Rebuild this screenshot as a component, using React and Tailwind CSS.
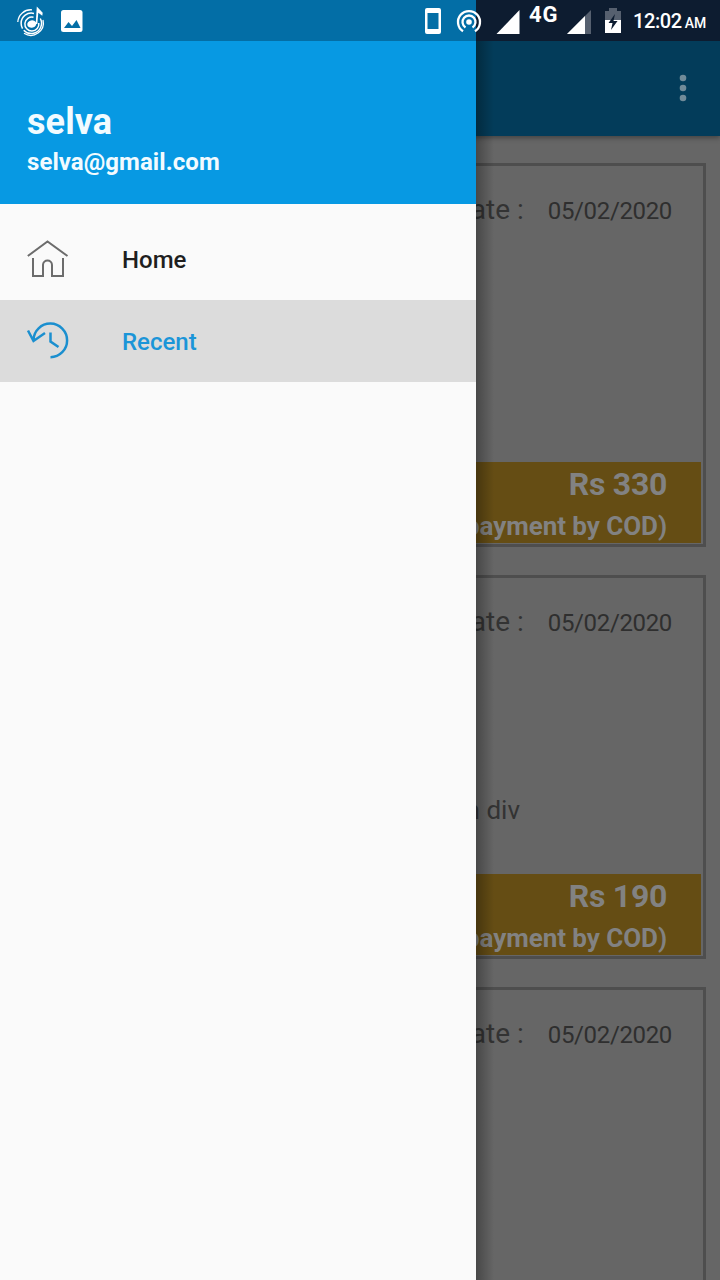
const cards = [
  { date: '05/02/2020', price: 'Rs 330', note: '' },
  { date: '05/02/2020', price: 'Rs 190', note: 'n div' },
  { date: '05/02/2020' },
];

function StatusBar() {
  return (
    <div className="absolute inset-x-0 top-0 flex h-[41px] text-white">
      <div className="w-[476px] bg-[#036ea6]" />
      <div className="flex-1 bg-[#0d1c30]" />
      <svg className="absolute inset-0" width="720" height="41" viewBox="0 0 720 41" fill="none" stroke="#fff">
        <ellipse cx="31.800" cy="24" rx="4.600" ry="3.700" fill="#fff" stroke="none" transform="rotate(-15 31.8 24)" />
        <path d="M35.700 24L36.800 6.500l5.900 6.200-.4 3-4-3-1 11.300z" fill="#fff" stroke="none" />
        <path d="M33.500 17.200A7 7 0 1 0 38.800 23" strokeWidth="1.500" />
        <path d="M34 13.500A10.200 10.200 0 1 0 40.300 18.500" strokeWidth="1.500" strokeDasharray="24 2 40" />
        <path d="M32 9.800A13 13 0 0 0 17.800 22M43 20A12.500 12.500 0 0 1 24 33.300" strokeWidth="1.300" />
        <rect x="61" y="10" width="21.500" height="22" rx="2.500" fill="#fff" stroke="none" />
        <path d="M64 28l4.500-6 3.500 4 4.500-6 4 8z" fill="#036ea6" stroke="none" />
        <path d="M427 8h12a2 2 0 0 1 2 2v22a2 2 0 0 1-2 2h-12a2 2 0 0 1-2-2V10a2 2 0 0 1 2-2zm.5 5v16h11V13z" fill="#fff" stroke="none" fillRule="evenodd" />
        <circle cx="469" cy="22" r="2.800" fill="#fff" stroke="none" />
        <path d="M465.500 27.500a6.500 6.500 0 1 1 7 0M463 31.300a11 11 0 1 1 12 0" strokeWidth="2.300" />
        <path d="M519.500 10v24h-23z" fill="#fff" stroke="none" />
        <path d="M591 10v24h-24z" fill="#56606f" stroke="none" />
        <path d="M585 16v18h-18z" fill="#fff" stroke="none" />
        <path d="M605 11h4V8h8v3h4v9h-16z" fill="#56606f" stroke="none" />
        <path d="M605 20h16v13h-16z" fill="#fff" stroke="none" />
        <path d="M615 14l-6.500 9h4l-1.500 7 6.500-9h-4z" fill="#0d1c30" stroke="none" />
      </svg>
      <span className="absolute left-[529px] top-[4px] text-[22px] font-bold leading-[22px] tracking-[1px]">4G</span>
      <div className="absolute left-[633px] top-[9px] flex items-baseline gap-[3px] whitespace-nowrap font-medium leading-6">
        <span className="text-[20px] tracking-[-0.4px]">12:02</span>
        <span className="text-[14px]">AM</span>
      </div>
    </div>
  );
}

function OrderCard({ date, price, note }) {
  return (
    <article className="flex h-[384px] shrink-0 flex-col border-[3px] border-[#4e4e4e] pb-[1px] pr-[2px]">
      <div className="flex h-[88px] items-baseline justify-end pr-[29px] pt-[26px] text-[#2f2f2f]">
        <span className="mr-[24px] text-[28px] leading-[36px] text-[#333]">Date :</span>
        <span className="text-[24px] leading-[36px] tracking-[-0.35px]">{date}</span>
      </div>
      {price && (
        <>
          <div className="flex flex-1 items-end justify-end pb-[46px] pr-[181px] text-[26px] leading-[36px] text-[#333]">{note}</div>
          <footer className="flex h-[81px] flex-col items-end bg-[#654d14] pr-[34px] font-bold text-[#828282]">
            <span className="pt-px text-[32px] leading-[42px] tracking-[-0.3px]">{price}</span>
            <span className="pt-px text-[26px] leading-[40px] tracking-[-0.05px]">(payment by COD)</span>
          </footer>
        </>
      )}
    </article>
  );
}

function HomeIcon() {
  return (
    <svg width="42" height="40" viewBox="0 0 42 40" fill="none" stroke="#6c6c6c" strokeWidth="2">
      <path d="M.8 17L20.500 2.500 40.500 17M6 19v18h10V26c0-6 9-6 9 0v11h11V19" />
    </svg>
  );
}

function RecentIcon() {
  return (
    <svg width="42" height="40" viewBox="0 0 42 40" fill="none" stroke="#1b8fcf" strokeWidth="2.500">
      <path d="M6.500 19A16.800 16.800 0 1 1 23.500 36.200M1 9.500l5.500 10.500L18 12M23.500 11.500v9l8 5.500" />
    </svg>
  );
}

export default function App() {
  return (
    <div className="relative h-[1280px] w-[720px] overflow-hidden bg-[#666] font-['Roboto',sans-serif]">
      <div className="flex h-full flex-col pt-[41px]">
        <header className="flex h-[95px] shrink-0 items-center justify-end bg-[#033c5a] pb-[2px] pr-[33px] shadow-[0_2px_5px_rgba(0,0,0,0.35)]">
          <svg width="8" height="28" viewBox="0 0 8 28" fill="#718b99">
            <circle cx="4" cy="4" r="3.300" />
            <circle cx="4" cy="14" r="3.300" />
            <circle cx="4" cy="24" r="3.300" />
          </svg>
        </header>
        <main className="flex flex-col gap-[28px] pl-[14px] pr-[14px] pt-[27px]">
          {cards.map((card, i) => (
            <OrderCard key={i} {...card} />
          ))}
        </main>
      </div>
      <div className="absolute bottom-0 left-[476px] top-[41px] w-[18px] bg-linear-to-r from-black/30 to-transparent" />
      <aside className="absolute bottom-0 left-0 top-[41px] flex w-[476px] flex-col bg-[#fafafa]">
        <div className="flex h-[163px] flex-col justify-end bg-[#0799e3] pb-[23px] pl-[27px] font-bold text-[#f2fbff]">
          <span className="text-[36px] leading-[42px] tracking-[0.1px]">selva</span>
          <span className="text-[24px] leading-[38px] tracking-[0.06px]">selva@gmail.com</span>
        </div>
        <nav className="pt-[14px] text-[24px] font-medium">
          <a className="flex h-[82px] items-center pl-[27px] text-[#1f1f1f]">
            <HomeIcon />
            <span className="ml-[53px] pt-[2px]">Home</span>
          </a>
          <a className="flex h-[82px] items-center bg-[#dcdcdc] pl-[27px] text-[#1b95d8]">
            <RecentIcon />
            <span className="ml-[53px] pt-[2px]">Recent</span>
          </a>
        </nav>
      </aside>
      <StatusBar />
    </div>
  );
}
